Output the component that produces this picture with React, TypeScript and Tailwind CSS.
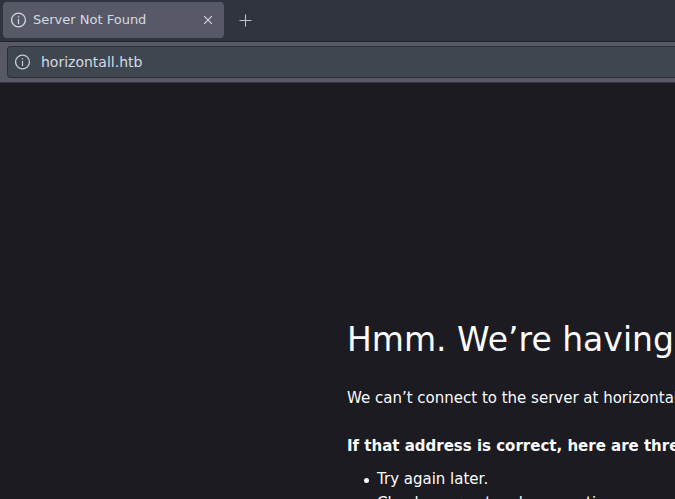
import React from "react";

function InfoIcon() {
  return (
    <svg
      viewBox="0 0 16 16"
      className="size-4 shrink-0"
      fill="none"
      stroke="currentColor"
      aria-hidden="true"
    >
      <circle cx="7.5" cy="8" r="6.9" strokeWidth="1.3" />
      <path d="M7.5 7v5" strokeWidth="1.2" />
      <path d="M7.5 4.2v1.4" strokeWidth="1.2" />
    </svg>
  );
}

function TabBar() {
  return (
    <div className="flex h-[42px] items-start border-b border-[#20232c] bg-[#30343f] pt-0.5 pl-[3px]">
      <div className="flex h-9 w-[221px] items-center rounded bg-[#585966] pr-2 pl-2 text-[#d3dae3]">
        <InfoIcon />
        <span className="ml-1.5 flex-1 text-[13px] leading-5 whitespace-nowrap">
          Server Not Found
        </span>
        <button
          type="button"
          aria-label="Close tab"
          className="flex size-4 items-center justify-center"
        >
          <svg viewBox="0 0 16 16" className="size-4" fill="none" stroke="currentColor" aria-hidden="true">
            <path d="M4.2 4.2l7.6 7.6M11.8 4.2l-7.6 7.6" strokeWidth="1.1" />
          </svg>
        </button>
      </div>
      <button
        type="button"
        aria-label="New tab"
        className="ml-3 flex h-9 w-5 items-center justify-center text-[#bcc2cd]"
      >
        <svg viewBox="0 0 16 16" className="size-4" fill="none" stroke="currentColor" aria-hidden="true">
          <path d="M7.5 2.5v12M1.5 8.5h12" strokeWidth="1.1" />
        </svg>
      </button>
    </div>
  );
}

function AddressBar() {
  return (
    <div className="border-b border-[#353641] bg-[#585966] py-1 pl-[7px]">
      <label className="flex h-8 items-center rounded-l border-y border-l border-[#2b2e39] bg-[#404650] pl-[7px] text-[#c5ccd6]">
        <InfoIcon />
        <input
          type="text"
          aria-label="Address"
          defaultValue="horizontall.htb"
          spellCheck={false}
          className="ml-2.5 min-w-0 flex-1 bg-transparent text-sm leading-5 text-[#d3dae3] outline-none"
        />
      </label>
    </div>
  );
}

const suggestions = ["Try again later.", "Check your network connection."];

function ErrorPage() {
  return (
    <main className="min-h-0 flex-1 overflow-hidden bg-[#1c1b22] pt-[237px] pl-[347px] text-[15px] leading-6 whitespace-nowrap text-[#fbfbfe]">
      <h1 className="text-[33px] leading-10">Hmm. We’re having trouble finding that site.</h1>
      <p className="mt-[26px]">We can’t connect to the server at horizontall.htb.</p>
      <p className="mt-6 font-bold">If that address is correct, here are three other things you can try:</p>
      <ul className="mt-[9px] pl-[17px]">
        {suggestions.map((text) => (
          <li
            key={text}
            className="flex items-center gap-2 before:mt-0.5 before:size-[5px] before:rounded-full before:bg-current before:content-['']"
          >
            {text}
          </li>
        ))}
      </ul>
    </main>
  );
}

export default function App() {
  return (
    <div className="flex h-screen flex-col overflow-hidden font-['DejaVu_Sans',sans-serif]">
      <TabBar />
      <AddressBar />
      <ErrorPage />
    </div>
  );
}
